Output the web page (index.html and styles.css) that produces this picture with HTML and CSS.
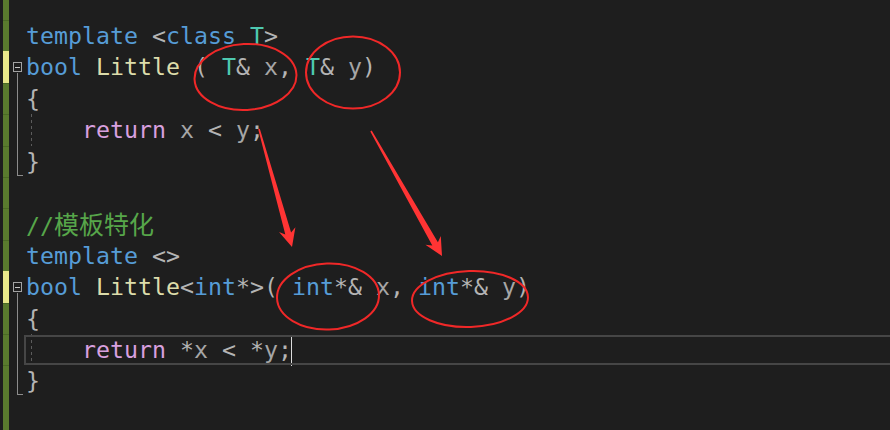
FILE: index.html
```html
<!DOCTYPE html>
<html lang="zh-CN">
<head>
    <meta charset="UTF-8">
    <title>模板特化</title>
    <link rel="stylesheet" href="styles.css">
</head>
<body>

<div class="editor">
    <div class="line">
        <div class="gutter"></div>
        <div class="code"><span class="k">template</span> <span class="p">&lt;</span><span class="k">class</span> <span class="t">T</span><span class="p">&gt;</span></div>
    </div>
    <div class="line">
        <div class="gutter changed"><div class="fold start"><i class="box"></i><i class="rail"></i></div></div>
        <div class="code"><span class="k">bool</span> <span class="f">Little</span> <span class="p">(</span> <span class="t">T</span><span class="p">&amp;</span> <span class="v">x</span><span class="p">,</span> <span class="t">T</span><span class="p">&amp;</span> <span class="v">y</span><span class="p">)</span></div>
    </div>
    <div class="line">
        <div class="gutter"><div class="fold mid"><i class="rail"></i></div></div>
        <div class="code"><span class="p">{</span></div>
    </div>
    <div class="line">
        <div class="gutter"><div class="fold mid"><i class="rail"></i></div></div>
        <div class="code guide">    <span class="r">return</span> <span class="v">x</span> <span class="p">&lt;</span> <span class="v">y</span><span class="p">;</span></div>
    </div>
    <div class="line">
        <div class="gutter"><div class="fold end"><i class="tick"></i></div></div>
        <div class="code"><span class="p">}</span></div>
    </div>
    <div class="line">
        <div class="gutter"></div>
        <div class="code"></div>
    </div>
    <div class="line">
        <div class="gutter"></div>
        <div class="code"><span class="c">//<span class="cjk">模板特化</span></span></div>
    </div>
    <div class="line">
        <div class="gutter"></div>
        <div class="code"><span class="k">template</span> <span class="p">&lt;&gt;</span></div>
    </div>
    <div class="line">
        <div class="gutter changed"><div class="fold start"><i class="box"></i><i class="rail"></i></div></div>
        <div class="code"><span class="k">bool</span> <span class="f">Little</span><span class="p">&lt;</span><span class="k">int</span><span class="p">*&gt;(</span> <span class="k">int</span><span class="p">*&amp;</span> <span class="v">x</span><span class="p">,</span> <span class="k">int</span><span class="p">*&amp;</span> <span class="v">y</span><span class="p">)</span></div>
    </div>
    <div class="line">
        <div class="gutter"><div class="fold mid"><i class="rail"></i></div></div>
        <div class="code"><span class="p">{</span></div>
    </div>
    <div class="line current">
        <div class="gutter"><div class="fold mid"><i class="rail"></i></div></div>
        <div class="code guide">    <span class="r">return</span> <span class="p">*</span><span class="v">x</span> <span class="p">&lt;</span> <span class="p">*</span><span class="v">y</span><span class="p">;</span><span class="caret"></span></div>
    </div>
    <div class="line">
        <div class="gutter"><div class="fold end"><i class="tick"></i></div></div>
        <div class="code"><span class="p">}</span></div>
    </div>
</div>

<!-- red hand-drawn marks laid over the editor -->
<svg class="marks" width="890" height="430" viewBox="0 0 890 430">
    <g fill="none" stroke="#f02828" stroke-width="2">
        <ellipse cx="245.5" cy="77" rx="51" ry="33" transform="rotate(-3 245.5 77)"/>
        <ellipse cx="353" cy="72.5" rx="47" ry="36"/>
        <ellipse cx="328" cy="296.5" rx="51" ry="33" transform="rotate(-2 328 296.5)"/>
        <ellipse cx="470" cy="299" rx="58" ry="28" transform="rotate(-2 470 299)"/>
    </g>
    <g fill="#ff3434">
        <polygon points="259.8,128.7 291.1,232.6 295.4,227.3 292,247 279,232.1 285.3,234.4 258.2,129.3"/>
        <polygon points="371.7,130.6 437.9,242.2 440.8,236 442,256 425.4,244.8 432.3,245.4 370.3,131.4"/>
    </g>
</svg>

</body>
</html>
```

FILE: styles.css
```css
*, *::before, *::after {
  padding: 0;
  margin: 0;
  box-sizing: border-box;
}

body {
  background-color: #1e1e1e;
  width: 890px;
  height: 430px;
  overflow: hidden;
  position: relative;
}

.editor {
  min-height: 430px;
  padding-top: 20px;
  font-family: "DejaVu Sans Mono", "Liberation Mono", monospace;
  font-size: 23.26px;
  color: #b4b4b4;
  /* green "saved" band on the far left */
  background:
    linear-gradient(90deg, transparent 3px, #5a7b2e 3px, #5a7b2e 9px, transparent 9px);
}

.line {
  display: flex;
  height: 31.4px;
  position: relative;
}

.gutter {
  flex: 0 0 26px;
  display: flex;
  padding-left: 13px;
  background:
    linear-gradient(#4b6a25, #4b6a25) 3px 0 / 6px 1px no-repeat;

  &.changed {
    background:
      linear-gradient(90deg, transparent 3px, #e8e88a 3px, #e8e88a 9px, transparent 9px);
  }
}

.fold {
  width: 9px;
  display: flex;
  flex-direction: column;
  align-items: center;

  i { display: block; }

  .box {
    width: 9px;
    height: 10px;
    margin-top: 11px;
    border: 1px solid #a3a3a3;
    background: linear-gradient(#c8c8c8, #c8c8c8) center / 5px 1px no-repeat;
  }

  .rail {
    flex: 1;
    width: 1px;
    background-color: #8c8c8c;
  }

  &.start .rail { margin-top: 1px; }

  &.end {
    align-items: flex-start;

    .tick {
      width: 6px;
      height: 30px;
      margin-left: 4px;
      border-left: 1px solid #8c8c8c;
      border-bottom: 1px solid #8c8c8c;
    }
  }
}

.code {
  flex: 1;
  white-space: pre;
  line-height: 31.4px;

  &.guide {
    background:
      repeating-linear-gradient(#5c5c5c 0 3px, transparent 3px 6px) 5px 0 / 1px 100% no-repeat;
  }
}

.line.current .code::after {
  content: '';
  position: absolute;
  top: 1px;
  bottom: 0;
  left: 24px;
  right: -10px;
  border: 2px solid #464646;
}

.caret {
  display: inline-block;
  width: 1px;
  height: 29px;
  margin-left: -1px;
  vertical-align: middle;
  background-color: #dcdcdc;
}

/* token colours */
.k { color: #569cd6; }
.t { color: #4ec9b0; }
.f { color: #dcdcaa; }
.p { color: #b4b4b4; }
.v { color: #a6a6a6; }
.r { color: #d8a0df; }
.c { color: #57a64a; }

.cjk {
  font-family: "Noto Sans CJK SC", sans-serif;
  font-size: 25px;
}

.marks {
  position: absolute;
  top: 0;
  left: 0;
  pointer-events: none;
}
```
